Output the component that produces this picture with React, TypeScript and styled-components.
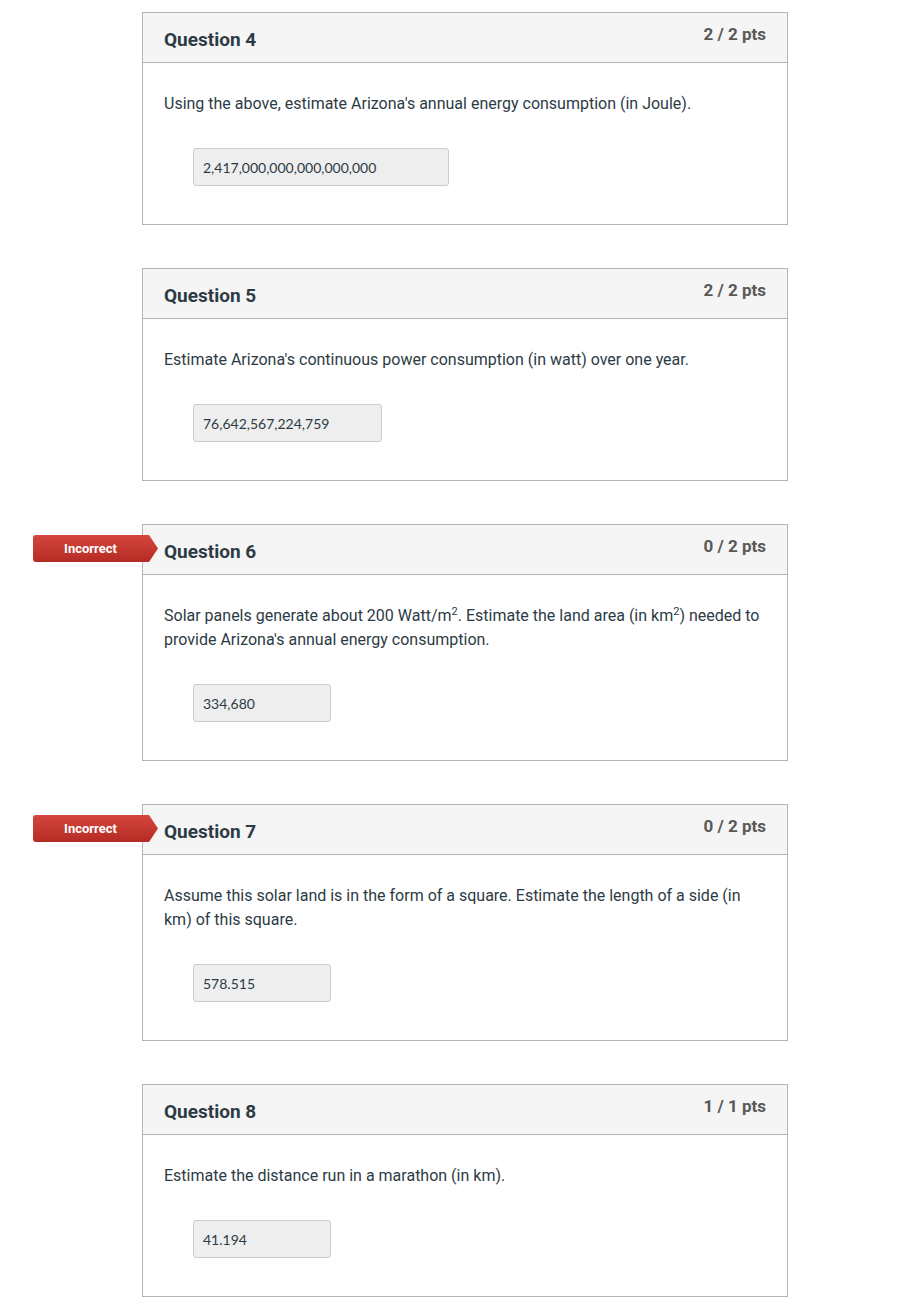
import React from "react";
import styled, { createGlobalStyle } from "styled-components";

const GlobalStyle = createGlobalStyle`
  body {
    margin: 0;
    background: #fff;
    font-family: Roboto, "Liberation Sans", sans-serif;
    color: #2d3b45;
  }
`;

const Page = styled.div`
  width: 646px;
  margin-left: 142px;
  padding-top: 12px;
  display: flex;
  flex-direction: column;
  gap: 43px;
`;

const Card = styled.div`
  position: relative;
  border: 1px solid #b4b4b4;
  background: #fff;
`;

const Header = styled.div`
  height: 49px;
  display: flex;
  justify-content: space-between;
  align-items: flex-start;
  padding: 0 21px;
  background: #f5f5f5;
  border-bottom: 1px solid #b4b4b4;
`;

const Title = styled.div`
  padding-top: 16px;
  font-size: 19px;
  line-height: 22px;
  font-weight: 700;
  color: #2d3b45;
`;

const Points = styled.div`
  padding-top: 11px;
  font-size: 17px;
  line-height: 20px;
  font-weight: 700;
  color: #585858;
`;

const Body = styled.div`
  padding: 29px 21px 38px;
`;

const Text = styled.div`
  font-size: 16px;
  line-height: 24px;
  color: #2d3b45;

  sup {
    font-size: 11px;
    line-height: 0;
    vertical-align: 6px;
  }
`;

const Answer = styled.div<{ $width: number }>`
  box-sizing: border-box;
  margin: 32px 0 0 29px;
  width: ${(p) => p.$width}px;
  height: 38px;
  padding-left: 9px;
  display: flex;
  align-items: center;
  background: #eeeeee;
  border: 1px solid #cccccc;
  border-radius: 3px;
  font-family: Lato, "Liberation Sans", sans-serif;
  font-size: 14px;
  color: #2d3b45;
`;

const Badge = styled.div`
  position: absolute;
  left: -110px;
  top: 10px;
  width: 125px;
  height: 27px;
  box-sizing: border-box;
  padding-right: 10px;
  display: flex;
  align-items: center;
  justify-content: center;
  background: linear-gradient(#d4463e, #b52c25);
  clip-path: polygon(0 0, 116px 0, 125px 50%, 116px 100%, 0 100%);
  border-radius: 3px 0 0 3px;
  color: #fff;
  font-size: 13px;
  font-weight: 700;
`;

type Q = {
  n: number;
  pts: string;
  text: React.ReactNode;
  answer: string;
  width: number;
  incorrect?: boolean;
};

const questions: Q[] = [
  {
    n: 4,
    pts: "2 / 2 pts",
    text: "Using the above, estimate Arizona's annual energy consumption (in Joule).",
    answer: "2,417,000,000,000,000,000",
    width: 256,
  },
  {
    n: 5,
    pts: "2 / 2 pts",
    text: "Estimate Arizona's continuous power consumption (in watt) over one year.",
    answer: "76,642,567,224,759",
    width: 189,
  },
  {
    n: 6,
    pts: "0 / 2 pts",
    text: (
      <>
        Solar panels generate about 200 Watt/m<sup>2</sup>. Estimate the land area (in km
        <sup>2</sup>) needed to provide Arizona's annual energy consumption.
      </>
    ),
    answer: "334,680",
    width: 138,
    incorrect: true,
  },
  {
    n: 7,
    pts: "0 / 2 pts",
    text: "Assume this solar land is in the form of a square. Estimate the length of a side (in km) of this square.",
    answer: "578.515",
    width: 138,
    incorrect: true,
  },
  {
    n: 8,
    pts: "1 / 1 pts",
    text: "Estimate the distance run in a marathon (in km).",
    answer: "41.194",
    width: 138,
  },
];

export default function App() {
  return (
    <>
      <GlobalStyle />
      <Page>
        {questions.map((q) => (
          <Card key={q.n}>
            {q.incorrect && <Badge>Incorrect</Badge>}
            <Header>
              <Title>Question {q.n}</Title>
              <Points>{q.pts}</Points>
            </Header>
            <Body>
              <Text>{q.text}</Text>
              <Answer $width={q.width}>{q.answer}</Answer>
            </Body>
          </Card>
        ))}
      </Page>
    </>
  );
}
